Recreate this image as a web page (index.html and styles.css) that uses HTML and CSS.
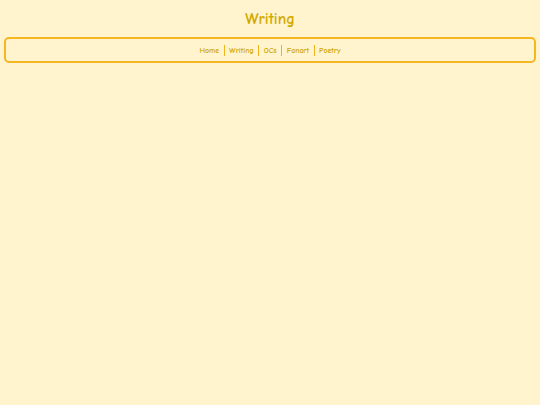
FILE: index.html
```html
<!DOCTYPE html>
<html>
<head>
<meta charset="utf-8">
<link rel="stylesheet" href="styles.css">
</head>
<body>
<header class="site-header">
  <h1 class="title">Writing</h1>
  <nav class="nav">
    <a class="nav-link" href="#">Home</a>
    <a class="nav-link" href="#">Writing</a>
    <a class="nav-link" href="#">OCs</a>
    <a class="nav-link" href="#">Fanart</a>
    <a class="nav-link" href="#">Poetry</a>
  </nav>
</header>
</body>
</html>
```
FILE: styles.css
```css
html, body {
  margin: 0;
  padding: 0;
  background: #fff4cd;
}
body {
  font-family: "Comic Sans MS", "Comic Neue", "DejaVu Sans", sans-serif;
  color: #d2a900;
  height: 405px;
}
.site-header {
  padding-top: 9px;
}
.title {
  margin: 0;
  text-align: center;
  font-size: 15.7px;
  line-height: 20px;
  font-weight: bold;
  color: #d2a900;
}
.nav {
  margin: 8px 4px 0;
  height: 22px;
  border: 2px solid #f5b622;
  border-radius: 5px;
  display: flex;
  justify-content: center;
  align-items: center;
}
.nav-link {
  font-size: 7.8px;
  font-weight: bold;
  color: #d2a900;
  text-decoration: none;
  padding: 0 4.5px;
  line-height: 11px;
  margin-top: 1px;
  border-right: 1px solid #efb41e;
}
.nav-link:last-child {
  border-right: none;
}
```
